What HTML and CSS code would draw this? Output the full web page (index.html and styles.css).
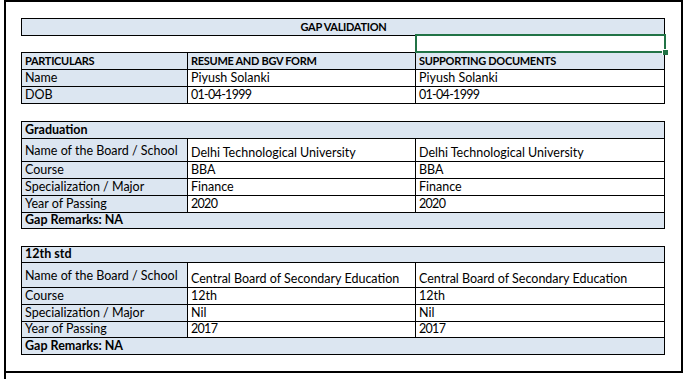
FILE: index.html
```html
<!DOCTYPE html>
<html lang="en">
<head>
<meta charset="utf-8">
<title>Gap Validation</title>
<link rel="stylesheet" href="styles.css">
</head>
<body>
<div class="sheet">
  <div class="grid grid-title">
    <div class="cell label caps center span">GAP VALIDATION</div>
  </div>
  <div class="blank-row">
    <div class="selection"><span class="handle"></span></div>
  </div>
  <div class="grid grid-top">
    <div class="cell label caps">PARTICULARS</div>
    <div class="cell label caps">RESUME AND BGV FORM</div>
    <div class="cell label caps">SUPPORTING DOCUMENTS</div>
    <div class="cell label">Name</div>
    <div class="cell">Piyush Solanki</div>
    <div class="cell">Piyush Solanki</div>
    <div class="cell label">DOB</div>
    <div class="cell num">01-04-1999</div>
    <div class="cell num">01-04-1999</div>
  </div>

  <div class="grid grid-grad">
    <div class="cell label bold span">Graduation</div>
    <div class="cell label middle">Name of the Board / School</div>
    <div class="cell">Delhi Technological University</div>
    <div class="cell">Delhi Technological University</div>
    <div class="cell label">Course</div>
    <div class="cell">BBA</div>
    <div class="cell">BBA</div>
    <div class="cell label">Specialization / Major</div>
    <div class="cell">Finance</div>
    <div class="cell">Finance</div>
    <div class="cell label">Year of Passing</div>
    <div class="cell num">2020</div>
    <div class="cell num">2020</div>
    <div class="cell label bold span">Gap Remarks: NA</div>
  </div>

  <div class="grid grid-12th">
    <div class="cell label bold span">12th std</div>
    <div class="cell label middle">Name of the Board / School</div>
    <div class="cell">Central Board of Secondary Education</div>
    <div class="cell">Central Board of Secondary Education</div>
    <div class="cell label">Course</div>
    <div class="cell">12th</div>
    <div class="cell">12th</div>
    <div class="cell label">Specialization / Major</div>
    <div class="cell">Nil</div>
    <div class="cell">Nil</div>
    <div class="cell label">Year of Passing</div>
    <div class="cell num">2017</div>
    <div class="cell num">2017</div>
    <div class="cell label bold span">Gap Remarks: NA</div>
  </div>
</div>
<div class="sheet-tail"></div>
</body>
</html>
```

FILE: styles.css
```css
* {
  box-sizing: border-box;
}

html, body {
  margin: 0;
  padding: 0;
  background: #ffffff;
}

body {
  font-family: Lato, "Liberation Sans", sans-serif;
  font-size: 12.5px;
  color: #000000;
}

.sheet {
  width: 679px;
  margin-left: 4px;
  border: 2px solid #000000;
  padding: 16px 0 16px 15px;
}

.sheet-tail {
  margin-left: 4px;
  width: 2px;
  height: 6px;
  background: #000000;
}

.grid {
  display: grid;
  grid-template-columns: 166px 228px 249px;
  width: 644px;
  border-top: 1px solid #000000;
  border-left: 1px solid #000000;
}

.grid-title {
  grid-template-rows: 17px;
}

.grid-top {
  grid-auto-rows: 17px;
}

.grid-grad {
  margin-top: 17px;
  grid-template-rows: 17px 23px 17px 17px 17px 16px;
}

.grid-12th {
  margin-top: 17px;
  grid-template-rows: 16px 25px 17px 17px 16px 17px;
}

.cell {
  display: flex;
  align-items: flex-end;
  border-right: 1px solid #000000;
  border-bottom: 1px solid #000000;
  padding: 0 2px 2px 3px;
  line-height: 13px;
  white-space: nowrap;
  background: #ffffff;
}

.label {
  background: #dce6f1;
}

.caps {
  font-weight: 700;
  font-size: 11px;
  letter-spacing: -0.3px;
}

.bold {
  font-weight: 700;
  font-size: 12.5px;
}

.num {
  letter-spacing: -0.7px;
}

.center {
  justify-content: center;
}

.span {
  grid-column: 1 / -1;
}

.middle {
  align-items: center;
  padding-bottom: 0;
}

.blank-row {
  position: relative;
  height: 16px;
  width: 644px;
}

.selection {
  position: absolute;
  left: 394px;
  top: -2px;
  width: 251px;
  height: 19px;
  border: 2px solid #217346;
}

.handle {
  position: absolute;
  right: -4px;
  bottom: -4px;
  width: 6px;
  height: 6px;
  background: #217346;
  border-left: 1px solid #ffffff;
  border-top: 1px solid #ffffff;
}
```
